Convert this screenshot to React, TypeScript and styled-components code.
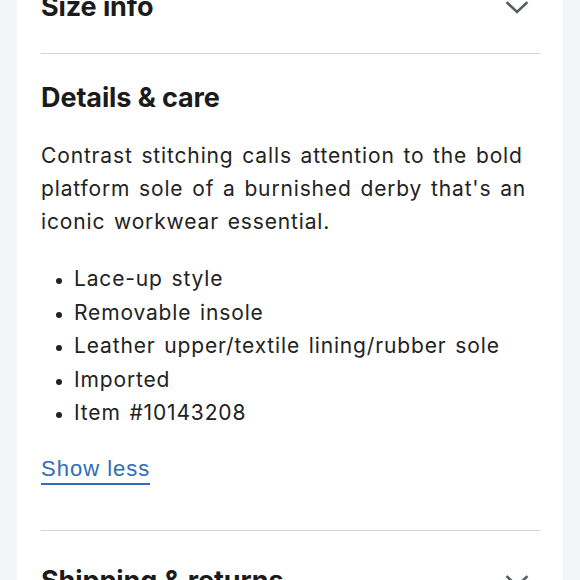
import { FC } from 'react';
import styled, { createGlobalStyle } from 'styled-components';

const GlobalStyle = createGlobalStyle`
    html, body {
        margin: 0;
        padding: 0;
        background: #f4f5f7;
    }
    body {
        font-family: Inter, "Liberation Sans", sans-serif;
        color: #222;
        overflow: hidden;
    }
`;

type Section = {
    title: string;
    open?: boolean;
};

const details = {
    description: "Contrast stitching calls attention to the bold platform sole of a burnished derby that's an iconic workwear essential.",
    bullets: [
        'Lace-up style',
        'Removable insole',
        'Leather upper/textile lining/rubber sole',
        'Imported',
        'Item #10143208',
    ],
};

const Chevron: FC = () => (
    <ToggleButton type="button" aria-label="Expand">
        <svg viewBox="0 0 24 24" aria-hidden="true">
            <path d="M2.5 8 L12 17 L21.5 8" />
        </svg>
    </ToggleButton>
);

const AccordionHeader: FC<Section> = ({ title, open }) => (
    <Header>
        <Title>{title}</Title>
        {!open && <Chevron />}
    </Header>
);

export default function App() {
    return (
        <>
            <GlobalStyle />
            <Page>
                <Card>
                    <AccordionSection>
                        <AccordionHeader title="Size info" />
                    </AccordionSection>
                    <AccordionSection $open>
                        <AccordionHeader title="Details & care" open />
                        <Body>
                            <Description>{details.description}</Description>
                            <BulletList>
                                {details.bullets.map((item) => (
                                    <li key={item}>{item}</li>
                                ))}
                            </BulletList>
                            <ShowLess href="#">Show less</ShowLess>
                        </Body>
                    </AccordionSection>
                    <AccordionSection>
                        <AccordionHeader title="Shipping & returns" />
                    </AccordionSection>
                </Card>
            </Page>
        </>
    );
}

const Page = styled.div`
    height: 580px;
    padding: 0 17px;
    overflow: hidden;
`;

const Card = styled.div`
    background: #fff;
    padding: 0 23px 0 24px;
    margin-top: -43px;
    min-height: 700px;
`;

const AccordionSection = styled.section<{ $open?: boolean }>`
    padding: 28px 0 ${({ $open }) => ($open ? '45px' : '24px')};
    border-bottom: 1px solid #d4d4d4;
`;

const Header = styled.div`
    display: flex;
    justify-content: space-between;
    align-items: center;
`;

const Title = styled.h2`
    margin: 0;
    font-family: Inter, "Liberation Sans", sans-serif;
    font-weight: 700;
    font-size: 27px;
    line-height: 32px;
    letter-spacing: -0.1px;
    color: #1b1b1b;
`;

const ToggleButton = styled.button`
    display: flex;
    align-items: center;
    justify-content: center;
    width: 44px;
    height: 44px;
    margin-right: 1px;
    padding: 0;
    border: none;
    background: none;

    svg {
        width: 24px;
        height: 24px;
        fill: none;
        stroke: #595d61;
        stroke-width: 2.6;
        stroke-linecap: square;
    }
`;

const Body = styled.div`
    margin-top: 25px;
`;

const Description = styled.p`
    margin: 0;
    font-size: 21px;
    line-height: 33px;
    letter-spacing: 0.85px;
    word-spacing: 2px;
    color: #222;
`;

const BulletList = styled.ul`
    margin: 24px 0 0;
    padding-left: 33px;
    font-size: 21px;
    line-height: 33.5px;
    letter-spacing: 0.85px;
    word-spacing: 2px;
    color: #222;
    li::marker {
        font-size: 18px;
    }
`;

const ShowLess = styled.a`
    display: inline-block;
    margin-top: 27px;
    font-family: "Liberation Sans", Arial, sans-serif;
    font-size: 22px;
    line-height: 24px;
    letter-spacing: 1px;
    color: #2f6db5;
    text-decoration: none;
    padding-bottom: 2px;
    border-bottom: 2px solid #2f6db5;
`;
